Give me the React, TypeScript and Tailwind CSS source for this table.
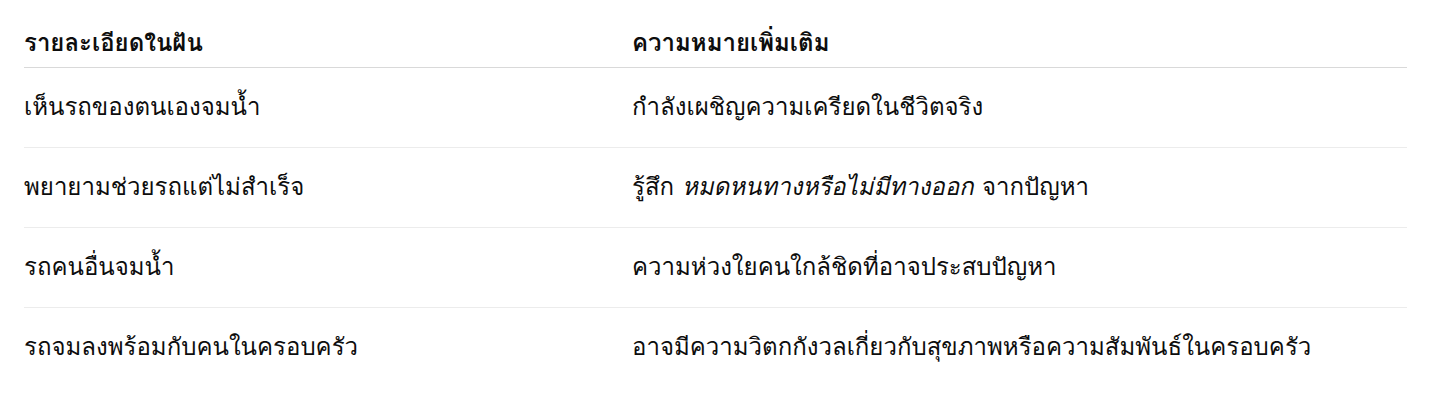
import React from 'react';

const rows: { dream: React.ReactNode; meaning: React.ReactNode }[] = [
    { dream: 'เห็นรถของตนเองจมน้ำ', meaning: 'กำลังเผชิญความเครียดในชีวิตจริง' },
    {
        dream: 'พยายามช่วยรถแต่ไม่สำเร็จ',
        meaning: (
            <>
                รู้สึก <em className="italic">หมดหนทางหรือไม่มีทางออก</em> จากปัญหา
            </>
        ),
    },
    { dream: 'รถคนอื่นจมน้ำ', meaning: 'ความห่วงใยคนใกล้ชิดที่อาจประสบปัญหา' },
    { dream: 'รถจมลงพร้อมกับคนในครอบครัว', meaning: 'อาจมีความวิตกกังวลเกี่ยวกับสุขภาพหรือความสัมพันธ์ในครอบครัว' },
];

const App: React.FC = () => {
    return (
        <div className="min-h-[408px] bg-white pl-6 pr-[31px] pt-5 text-[#0d0d0d] [font-family:'Loma','Noto_Sans_Thai_Looped',sans-serif]">
            <table className="w-full border-collapse text-left text-[24px]">
                <thead>
                    <tr className="border-b border-[#d9d9d9]">
                        <th className="w-[608px] h-[47px] p-0 font-bold align-middle">รายละเอียดในฝัน</th>
                        <th className="h-[47px] p-0 font-bold align-middle">ความหมายเพิ่มเติม</th>
                    </tr>
                </thead>
                <tbody>
                    {rows.map((row, index) => (
                        <tr key={index} className={index < rows.length - 1 ? 'border-b border-[#ececec]' : ''}>
                            <td className="h-[80px] p-0 align-middle">{row.dream}</td>
                            <td className="h-[80px] p-0 align-middle">{row.meaning}</td>
                        </tr>
                    ))}
                </tbody>
            </table>
        </div>
    );
};

export default App;
